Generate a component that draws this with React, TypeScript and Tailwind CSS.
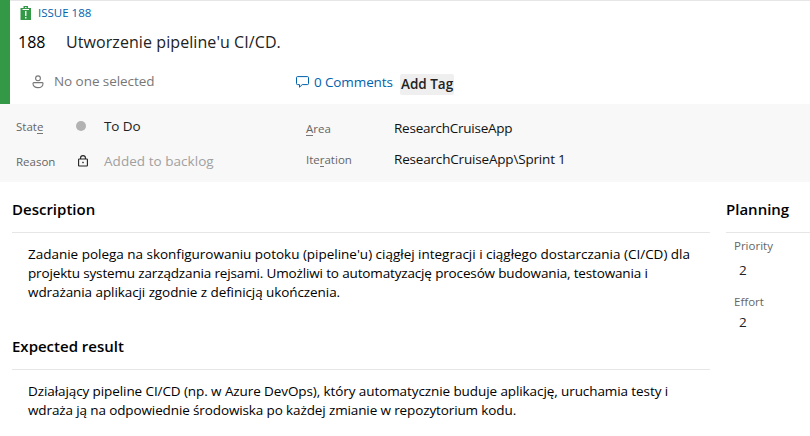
import type { ReactNode } from "react";

function IssueIcon() {
  return (
    <svg width="12" height="14" viewBox="0 0 12 14" className="block shrink-0">
      <path d="M0.5 2H11V14H0.5Z M3.5 0H8V3H3.5Z" fill="#339947" />
      <path d="M2.5 3.5H9M5 1.5H6.5" stroke="#fff" strokeWidth="1" />
      <path d="M5.75 5V10M5.75 11V12.4" stroke="#fff" strokeWidth="1.4" />
    </svg>
  );
}

function PersonIcon() {
  return (
    <svg width="12" height="14" viewBox="0 0 12 14" fill="none" stroke="#777" strokeWidth="1.1" className="block shrink-0">
      <circle cx="6" cy="3.3" r="2.4" />
      <path d="M1.8 7.6H10.2A0.8 0.8 0 0 1 11 8.4C11 11 9.2 12.6 6 12.6S1 11 1 8.4A0.8 0.8 0 0 1 1.8 7.6Z" />
    </svg>
  );
}

function CommentIcon() {
  return (
    <svg width="13" height="12" viewBox="0 0 13 12" fill="none" stroke="#0062ad" strokeWidth="1" className="block shrink-0">
      <path d="M1.5 0.6H11.5A1 1 0 0 1 12.5 1.6V7.6A1 1 0 0 1 11.5 8.6H6.2L3.5 11.2V8.6H1.5A1 1 0 0 1 0.5 7.6V1.6A1 1 0 0 1 1.5 0.6Z" />
    </svg>
  );
}

function LockIcon() {
  return (
    <svg width="10" height="12" viewBox="0 0 10 12" fill="none" stroke="#222" strokeWidth="1.1" className="block shrink-0">
      <rect x="0.6" y="4" width="8.8" height="7" rx="0.6" />
      <path d="M2.6 4V2.8A2.4 2.2 0 0 1 7.4 2.8V4" />
      <rect x="4.3" y="6.8" width="1.4" height="1.4" fill="#222" stroke="none" />
    </svg>
  );
}

function Label({ children }: { children: ReactNode }) {
  return <span className="text-[11.5px] leading-4 text-[#666]">{children}</span>;
}

function Key({ children }: { children: ReactNode }) {
  return <span className="inline-block h-[15px] border-b border-[#777] leading-4">{children}</span>;
}

function Heading({ children }: { children: ReactNode }) {
  return <h2 className="h-[34px] border-b border-[#e6e6e6] text-[15px] leading-5 font-semibold whitespace-nowrap text-black">{children}</h2>;
}

export default function App() {
  return (
    <div className="h-[436px] w-[810px] overflow-hidden bg-white font-['Open_Sans','Noto_Sans',sans-serif] text-[13.5px] whitespace-nowrap text-black">
      <header className="flex h-[104px] border-t border-[#e6e6e6]">
        <div className="-mt-px w-[10px] bg-[#339947]" />
        <div className="flex-1">
          <div className="flex h-6 items-center pl-[10px]">
            <IssueIcon />
            <span className="ml-[6px] text-[11.5px] text-[#0062ad]">ISSUE 188</span>
          </div>
          <div className="flex h-[34px] items-center pl-[8px] text-[16px]">
            <span className="w-[48px]">188</span>
            <h1 className="tracking-[0.08px] text-[#222]">Utworzenie pipeline'u CI/CD.</h1>
          </div>
          <div className="flex h-[45px] items-center">
            <div className="flex w-[286px] items-center pl-[22px] text-[#777]">
              <PersonIcon />
              <span className="ml-[10px] tracking-[-0.06px]">No one selected</span>
            </div>
            <div className="flex w-[104px] items-center pt-px text-[#0062ad]">
              <CommentIcon />
              <span className="ml-[5px] tracking-[-0.12px]">0 Comments</span>
            </div>
            <div className="mt-[5px] flex h-[21px] w-[54px] items-center rounded-[2px] bg-[#efefef] pt-px pl-px font-semibold text-[#222]">Add Tag</div>
          </div>
        </div>
      </header>

      <section className="flex h-[78px] bg-[#f8f8f8] pl-4">
        <div className="w-[290px]">
          <div className="flex h-[44px] items-center">
            <div className="w-[60px] pt-px"><Label>Stat<Key>e</Key></Label></div>
            <div className="h-[10px] w-[10px] rounded-full bg-[#b2b2b2]" />
            <span className="ml-[18px] tracking-[-0.1px] text-[#222]">To Do</span>
          </div>
          <div className="flex h-[26px] items-center">
            <div className="w-[62px]"><Label>Reason</Label></div>
            <LockIcon />
            <span className="ml-4 tracking-[0.04px] text-[#a0a0a0]">Added to backlog</span>
          </div>
        </div>
        <div>
          <div className="flex h-[49px] items-center">
            <div className="-mt-px w-[88px]"><Label><Key>A</Key>rea</Label></div>
            <span className="tracking-[-0.24px] text-[#111]">ResearchCruiseApp</span>
          </div>
          <div className="flex h-[12px] items-center">
            <div className="w-[88px]"><Label>Ite<Key>r</Key>ation</Label></div>
            <span className="tracking-[-0.18px] text-[#111]">ResearchCruiseApp\Sprint 1</span>
          </div>
        </div>
      </section>

      <main className="flex pt-[17px] pl-3">
        <div className="w-[698px]">
          <Heading>Description</Heading>
          <div className="pt-[12px] pl-4 leading-[19px]">
            <p className="tracking-[-0.015px]">Zadanie polega na skonfigurowaniu potoku (pipeline'u) ciągłej integracji i ciągłego dostarczania (CI/CD) dla</p>
            <p className="tracking-[-0.15px]">projektu systemu zarządzania rejsami. Umożliwi to automatyzację procesów budowania, testowania i</p>
            <p className="tracking-[-0.08px]">wdrażania aplikacji zgodnie z definicją ukończenia.</p>
          </div>
          <div className="h-[34px]" />
          <Heading>Expected result</Heading>
          <div className="pt-[12px] pl-4 leading-[19px]">
            <p className="tracking-[-0.09px]">Działający pipeline CI/CD (np. w Azure DevOps), który automatycznie buduje aplikację, uruchamia testy i</p>
            <p className="tracking-[-0.12px]">wdraża ją na odpowiednie środowiska po każdej zmianie w repozytorium kodu.</p>
          </div>
        </div>
        <aside className="ml-4 w-[84px]">
          <Heading>Planning</Heading>
          <div className="flex flex-col pt-[5px] pl-2">
            <Label>Priority</Label>
            <span className="mt-[6px] pl-[5px] leading-5 text-[#222]">2</span>
            <span className="mt-[14px] flex"><Label>Effort</Label></span>
            <span className="mt-[2px] pl-[5px] leading-5 text-[#222]">2</span>
          </div>
        </aside>
      </main>
    </div>
  );
}
